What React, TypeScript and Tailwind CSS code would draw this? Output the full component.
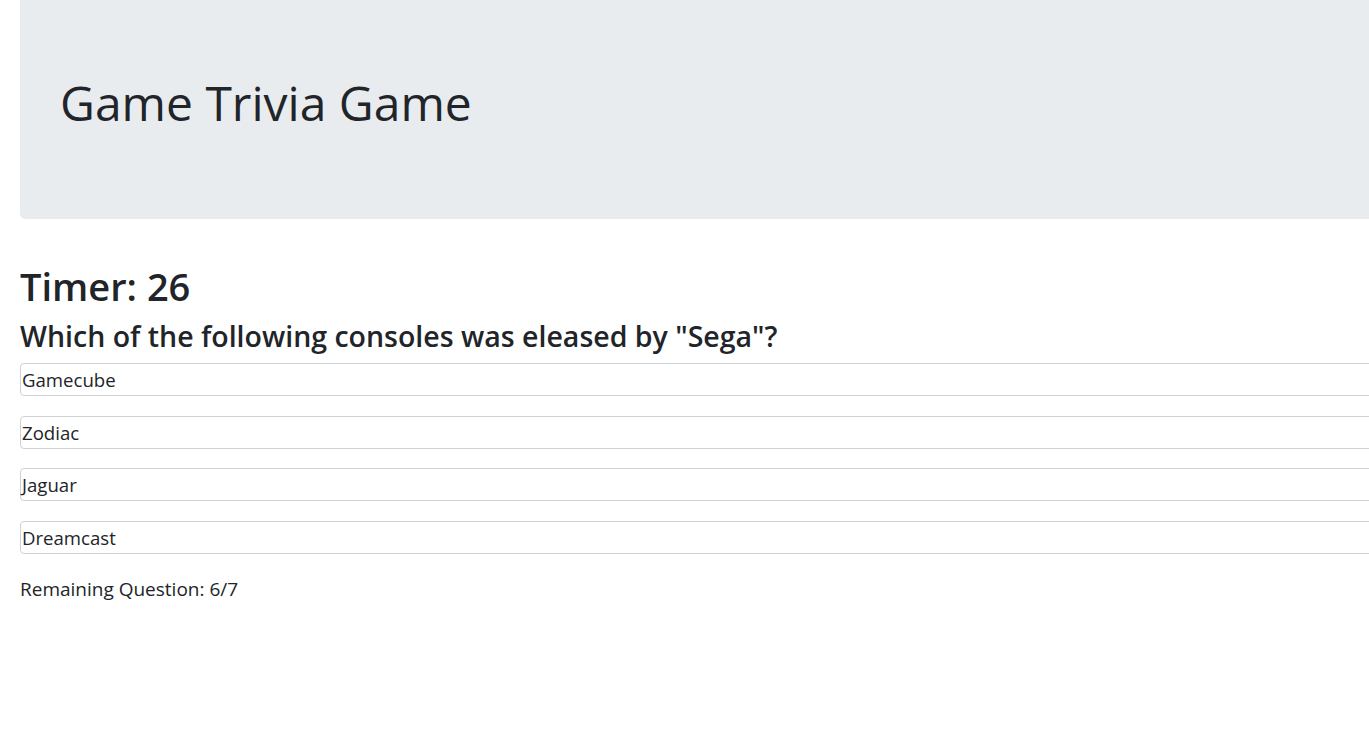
import React from 'react';

const answers = ['Gamecube', 'Zodiac', 'Jaguar', 'Dreamcast'];

export default function App() {
  return (
    <div className="w-full min-h-screen overflow-hidden bg-white text-[#212529]" style={{ fontFamily: '"Open Sans", "Noto Sans", sans-serif' }}>
      <div className="ml-[20px] w-[1400px]">
        {/* Jumbotron */}
        <div className="h-[219px] bg-[#e9ecef] rounded-b-[5px] flex items-center pl-[40px] pb-[14px]">
          <h1 className="text-[48px] leading-[56px] font-medium">Game Trivia Game</h1>
        </div>

        <div className="pt-[44px]">
          <h2 className="text-[38px] leading-[46px] font-semibold">Timer: 26</h2>
          <h3 className="mt-[9px] text-[28.5px] leading-[36px] font-semibold">
            Which of the following consoles was eleased by "Sega"?
          </h3>
          <div className="mt-[9px] flex flex-col gap-[19.67px]">
            {answers.map((a) => (
              <div key={a} className="h-[33px] border border-[#cfd2d5] rounded-[4px] pl-[1px] text-[18.6px] leading-[31px]">
                {a}
              </div>
            ))}
          </div>
          <p className="mt-[21px] text-[19px] leading-[28px]">Remaining Question: 6/7</p>
        </div>
      </div>
    </div>
  );
}
